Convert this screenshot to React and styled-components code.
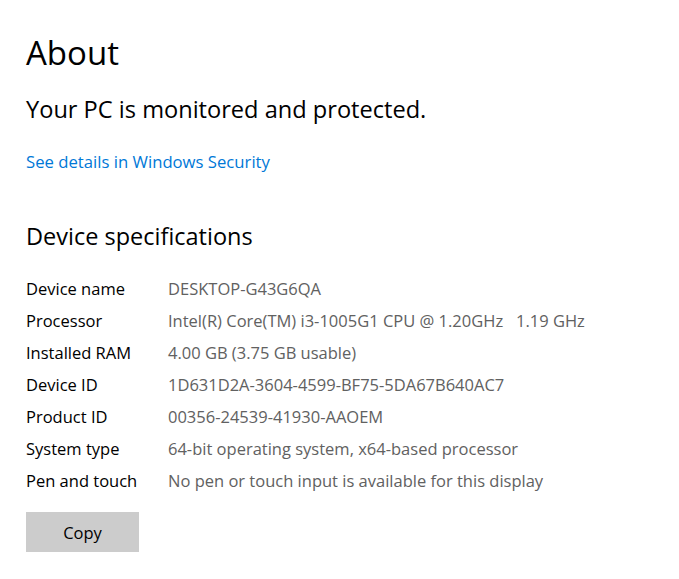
import React from 'react';
import styled, { createGlobalStyle } from 'styled-components';

const GlobalStyle = createGlobalStyle`
  body {
    margin: 0;
    background: #ffffff;
    font-family: "Open Sans", "Noto Sans", sans-serif;
    color: #000000;
  }
`;

const Page = styled.div`
  padding: 31px 26px 0 26px;
  display: flex;
  flex-direction: column;
  align-items: flex-start;
`;

const Title = styled.h1`
  margin: 0;
  font-size: 33px;
  line-height: 44px;
  font-weight: 400;
`;

const Status = styled.div`
  margin-top: 18px;
  font-size: 23.6px;
  line-height: 32px;
`;

const Link = styled.a`
  margin-top: 25px;
  font-size: 16.7px;
  line-height: 24px;
  color: #0078d7;
  text-decoration: none;
`;

const Section = styled.h2`
  margin: 46px 0 0 0;
  font-size: 23.5px;
  line-height: 32px;
  font-weight: 400;
`;

const Specs = styled.div`
  margin-top: 20px;
  display: grid;
  grid-template-columns: 142px auto;
  grid-auto-rows: 32px;
  align-items: center;
  font-size: 16.5px;
`;

const Label = styled.div`
  color: #000000;
  white-space: nowrap;
`;

const Value = styled.div`
  color: #616161;
  white-space: pre;
`;

const Button = styled.button`
  margin-top: 16px;
  width: 113px;
  height: 40px;
  border: none;
  background: #cccccc;
  font-family: inherit;
  font-size: 16.5px;
  color: #000000;
  padding: 0;
`;

const specs = [
  ['Device name', 'DESKTOP-G43G6QA'],
  ['Processor', 'Intel(R) Core(TM) i3-1005G1 CPU @ 1.20GHz   1.19 GHz'],
  ['Installed RAM', '4.00 GB (3.75 GB usable)'],
  ['Device ID', '1D631D2A-3604-4599-BF75-5DA67B640AC7'],
  ['Product ID', '00356-24539-41930-AAOEM'],
  ['System type', '64-bit operating system, x64-based processor'],
  ['Pen and touch', 'No pen or touch input is available for this display'],
];

const App = () => (
  <>
    <GlobalStyle />
    <Page>
      <Title>About</Title>
      <Status>Your PC is monitored and protected.</Status>
      <Link href="#">See details in Windows Security</Link>
      <Section>Device specifications</Section>
      <Specs>
        {specs.map(([label, value]) => (
          <React.Fragment key={label}>
            <Label>{label}</Label>
            <Value>{value}</Value>
          </React.Fragment>
        ))}
      </Specs>
      <Button>Copy</Button>
    </Page>
  </>
);

export default App;
